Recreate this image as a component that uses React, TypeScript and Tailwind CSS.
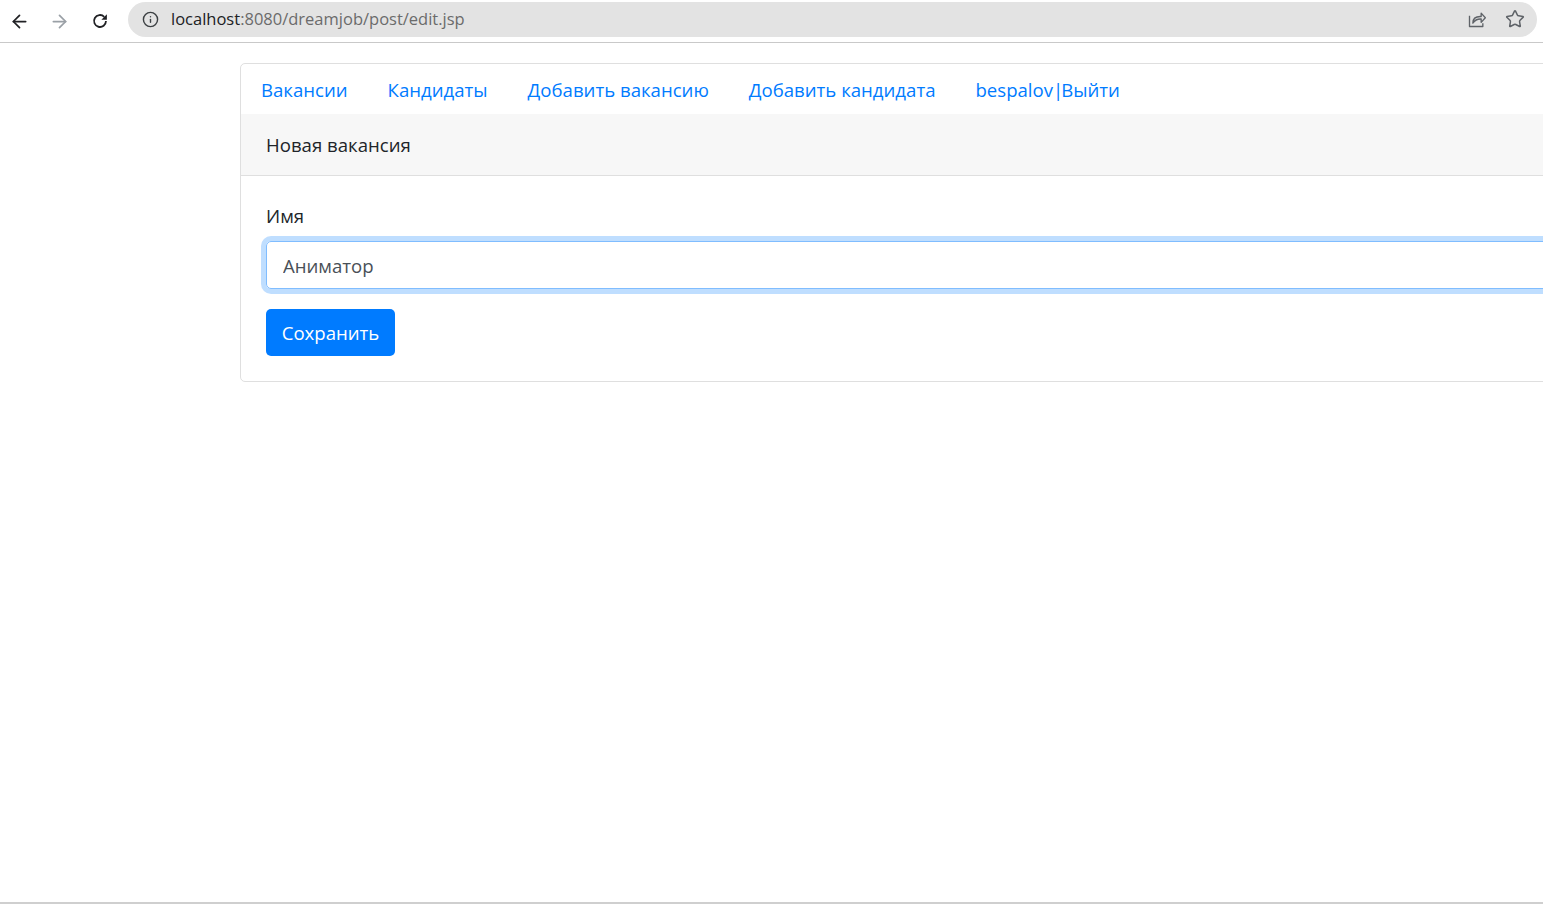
import { ArrowLeft, ArrowRight, Info, Star } from "lucide-react";

const navLinks = ["Вакансии", "Кандидаты", "Добавить вакансию", "Добавить кандидата"];

const ShareIcon = () => (
  <svg width="20" height="20" viewBox="0 0 24 24" fill="none" stroke="#5f6368" strokeWidth="1.6" strokeLinejoin="round">
    <path d="M3 8v13h16v-4" />
    <path d="M7 17c0-5 3-8 9-8h1V5l5 5.5-5 5.5v-4h-1c-4 0-7 2-9 5z" />
  </svg>
);

const ReloadIcon = () => (
  <svg width="22" height="22" viewBox="0 0 24 24" fill="none">
    <path d="M18.5 12a6.5 6.5 0 1 1-1.9-4.6" stroke="#202124" strokeWidth="2" />
    <path d="M19.5 4.5v6h-6z" fill="#202124" />
  </svg>
);

const BrowserBar = () => (
  <div className="h-[43px] shrink-0 border-b border-[#c9c9c9] bg-white flex items-center">
    <div className="flex items-center pl-[9px] gap-[19px] text-[#202124]">
      <ArrowLeft size={21} strokeWidth={2} />
      <ArrowRight size={21} strokeWidth={2} className="text-[#9aa0a6]" />
      <ReloadIcon />
    </div>
    <div className="ml-[17px] mr-[6px] flex-1 h-[35px] -mt-[4px] rounded-full bg-[#e3e3e3] flex items-center pl-[14px] pr-[12px]">
      <Info size={17} strokeWidth={2} className="text-[#3c4043]" />
      <div className="ml-[12px] text-[16.5px]">
        <span className="text-[#202124]">localhost</span>
        <span className="text-[#6b6b6b]">:8080/dreamjob/post/edit.jsp</span>
      </div>
      <div className="ml-auto flex items-center gap-[18px]">
        <ShareIcon />
        <Star size={20} strokeWidth={1.8} className="text-[#5f6368]" />
      </div>
    </div>
  </div>
);

export default function App() {
  return (
    <div
      className="w-[1543px] h-[907px] bg-white flex flex-col overflow-hidden"
      style={{ fontFamily: '"Open Sans", "Noto Sans", sans-serif' }}
    >
      <BrowserBar />
      <div className="h-[861px] shrink-0 border-b-2 border-[#cfcfcf] overflow-hidden pl-[240px] pt-[20px]">
        <div className="w-[1340px] border border-[#dfdfdf] rounded-[5px]">
          <ul className="flex h-[50px] items-center text-[18.6px] text-[#007bff] leading-[30px]">
            {navLinks.map((link) => (
              <li key={link} className="px-[20px] pt-[11px] pb-[9px]">
                {link}
              </li>
            ))}
            <li className="px-[20px] pt-[11px] pb-[9px]">
              bespalov<span className="tracking-[-2px]">|</span>Выйти
            </li>
          </ul>
          <div className="bg-[#f7f7f7] border-b border-[#dfdfdf] px-[25px] pt-[16px] pb-[15px] text-[18.6px] leading-[30px] text-[#212529]">
            Новая вакансия
          </div>
          <div className="p-[25px]">
            <div className="mb-[20px]">
              <label className="block mb-[10px] text-[18.6px] leading-[30px] text-[#212529]">Имя</label>
              <input
                type="text"
                defaultValue="Аниматор"
                className="block w-full h-[48px] px-[16px] text-[18.6px] text-[#495057] border border-[#80bdff] rounded-[5px] outline-none shadow-[0_0_0_5px_rgba(0,123,255,0.25)]"
              />
            </div>
            <button className="h-[47px] w-[129px] bg-[#007bff] text-white text-[18.6px] rounded-[5px]">
              Сохранить
            </button>
          </div>
        </div>
      </div>
    </div>
  );
}
